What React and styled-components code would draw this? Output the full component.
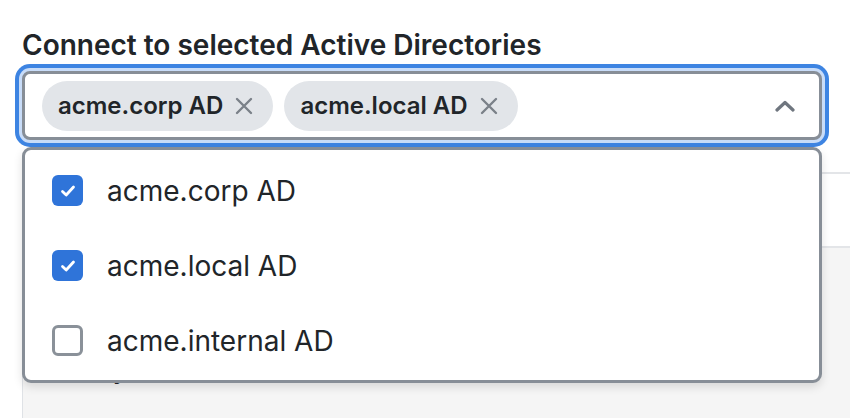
import React, { useState } from "react";
import styled, { createGlobalStyle } from "styled-components";

const GlobalStyle = createGlobalStyle`
  html, body { margin: 0; padding: 0; background: #ffffff; }
  body { font-family: Inter, "Noto Sans", "Liberation Sans", sans-serif; color: #212529; }
  * { box-sizing: border-box; }
`;

const Page = styled.div`
  width: 850px;
  height: 418px;
  overflow: hidden;
  padding: 28px 0 0 22px;
`;

const Label = styled.div`
  font-size: 28px;
  font-weight: 600;
  line-height: 34px;
  color: #212529;
`;

const Field = styled.div`
  position: relative;
  width: 800px;
  margin-top: 9px;
`;

const Control = styled.div`
  height: 69px;
  border: 3px solid #878e97;
  border-radius: 8px;
  box-shadow: 0 0 0 3px #c8dcf8, 0 0 0 7px #3d84e2;
  display: flex;
  align-items: center;
  padding: 0 24px 0 17px;
  gap: 11px;
  background: #fff;
`;

const Chip = styled.span`
  display: inline-flex;
  align-items: center;
  height: 50px;
  padding: 0 20px 0 16px;
  border-radius: 25px;
  background: #e2e5e9;
  font-size: 24px;
  font-weight: 600;
  color: #212529;
  gap: 12px;
`;

const Spacer = styled.div`
  flex: 1;
`;

const Menu = styled.div`
  position: absolute;
  left: 0;
  top: 76px;
  width: 800px;
  border: 3px solid #878e97;
  border-radius: 9px;
  background: #fff;
  padding: 3px 0 2px;
  box-shadow: 0 4px 10px rgba(0, 0, 0, 0.12);
  z-index: 2;
`;

const Option = styled.div`
  height: 75px;
  display: flex;
  align-items: center;
  padding-left: 27px;
  gap: 24px;
  font-size: 28px;
  color: #212529;
`;

const Box = styled.span`
  width: 31px;
  height: 31px;
  border-radius: 6px;
  display: inline-flex;
  align-items: center;
  justify-content: center;
  flex-shrink: 0;
  background: ${(p) => (p.$checked ? "#2f74d9" : "#fff")};
  border: ${(p) => (p.$checked ? "none" : "3px solid #8a9199")};
`;

const Panel = styled.div`
  margin-top: 32px;
  width: 900px;
  border-left: 1px solid #dfe2e6;
  border-top: 2px solid #e3e5e8;
`;

const PanelHead = styled.div`
  height: 74px;
  background: #fff;
  border-bottom: 2px solid #e3e5e8;
`;

const PanelBody = styled.div`
  height: 200px;
  background: #f5f5f5;
  padding: 103px 0 0 45px;
  font-size: 28px;
  color: #212529;
`;

const XIcon = () => (
  <svg width="18" height="18" viewBox="0 0 18 18" fill="none">
    <path d="M2 2 L16 16 M16 2 L2 16" stroke="#7b8189" strokeWidth="2.4" strokeLinecap="round" />
  </svg>
);

const Chevron = () => (
  <svg width="20" height="12" viewBox="0 0 20 12" fill="none">
    <path d="M2 10 L10 2.5 L18 10" stroke="#6f767f" strokeWidth="3.2" strokeLinecap="round" strokeLinejoin="round" />
  </svg>
);

const Check = () => (
  <svg width="18" height="18" viewBox="0 0 18 18" fill="none">
    <path d="M3.5 9.5 L7.2 13 L14.5 5" stroke="#fff" strokeWidth="2.8" strokeLinecap="round" strokeLinejoin="round" />
  </svg>
);

const options = [
  { label: "acme.corp AD", checked: true },
  { label: "acme.local AD", checked: true },
  { label: "acme.internal AD", checked: false },
];

export default function App() {
  const [items] = useState(options);
  return (
    <>
      <GlobalStyle />
      <Page>
        <Label>Connect to selected Active Directories</Label>
        <Field>
          <Control>
            {items.filter((o) => o.checked).map((o) => (
              <Chip key={o.label}>
                {o.label}
                <XIcon />
              </Chip>
            ))}
            <Spacer />
            <Chevron />
          </Control>
          <Menu>
            {items.map((o) => (
              <Option key={o.label}>
                <Box $checked={o.checked}>{o.checked && <Check />}</Box>
                {o.label}
              </Option>
            ))}
          </Menu>
        </Field>
        <Panel>
          <PanelHead />
          <PanelBody>Only</PanelBody>
        </Panel>
      </Page>
    </>
  );
}
